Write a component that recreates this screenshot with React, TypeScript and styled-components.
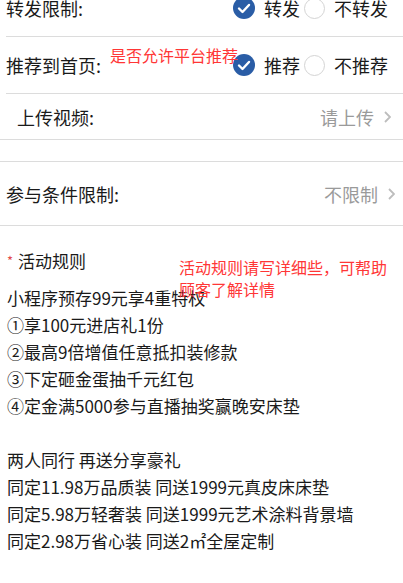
import styled, { createGlobalStyle } from 'styled-components';

const GlobalStyle = createGlobalStyle`
  body {
    margin: 0;
    background: #fff;
    font-family: "Noto Sans CJK SC", "Noto Sans", sans-serif;
    color: #1a1a1a;
  }
`;

const Page = styled.div`
  margin-top: -20px;
  width: 403px;
`;

const Row = styled.div<{ $height: number; $pad: number; $inset?: boolean; $right: number }>`
  position: relative;
  display: flex;
  align-items: center;
  justify-content: space-between;
  height: ${(p) => p.$height}px;
  margin-left: ${(p) => (p.$inset ? 6 : 0)}px;
  padding-left: ${(p) => p.$pad}px;
  padding-right: ${(p) => p.$right}px;
  border-bottom: 1px solid #dcdcdc;
  box-sizing: content-box;
`;

const Label = styled.span`
  font-size: 18px;
  line-height: 24px;
  color: #1a1a1a;
`;

const Note = styled.div<{ $left: number; $top: number }>`
  position: absolute;
  left: ${(p) => p.$left}px;
  top: ${(p) => p.$top}px;
  font-size: 16px;
  line-height: 22px;
  color: #ff3636;
  white-space: pre-line;
  width: 210px;
`;

const RadioGroup = styled.div`
  display: flex;
  align-items: center;
`;

const RadioItem = styled.label`
  display: flex;
  align-items: center;
  font-size: 18px;
  line-height: 24px;
  margin-right: 4px;

  &:last-child {
    margin-right: 0;
  }
`;

const Circle = styled.span`
  display: inline-block;
  width: 19px;
  height: 19px;
  border: 1px solid #d4d4d4;
  border-radius: 50%;
  margin-right: 9px;
`;

const CheckIcon = styled.svg`
  width: 22px;
  height: 22px;
  margin-right: 9px;
  flex-shrink: 0;
`;

const Value = styled.span`
  display: flex;
  align-items: center;
  gap: 10px;
  font-size: 18px;
  line-height: 24px;
  color: #9a9a9a;
`;

const Spacer = styled.div`
  height: 21px;
  border-bottom: 1px solid #dcdcdc;
`;

const Rules = styled.div`
  position: relative;
  padding: 21px 0 0 7px;
`;

const RulesTitle = styled.div`
  font-size: 17px;
  line-height: 27px;
  margin-bottom: 10px;
`;

const Star = styled.span`
  color: #e34a4a;
  font-size: 13px;
  margin-right: 5px;
  vertical-align: 2px;
`;

const Line = styled.div`
  font-size: 17px;
  line-height: 27px;
  min-height: 27px;
`;

function Radio({ label, checked }: { label: string; checked?: boolean }) {
  return (
    <RadioItem>
      {checked ? (
        <CheckIcon viewBox="0 0 22 22">
          <circle cx="11" cy="11" r="11" fill="#2a5da6" />
          <polyline
            points="6,11.5 9.5,15 16,8"
            fill="none"
            stroke="#fff"
            strokeWidth="2.4"
            strokeLinecap="round"
            strokeLinejoin="round"
          />
        </CheckIcon>
      ) : (
        <Circle />
      )}
      {label}
    </RadioItem>
  );
}

function Chevron() {
  return (
    <svg width="7" height="12" viewBox="0 0 7 12">
      <polyline points="1,1 6,6 1,11" fill="none" stroke="#bdbdbd" strokeWidth="1.8" />
    </svg>
  );
}

const rules = [
  '小程序预存99元享4重特权',
  '①享100元进店礼1份',
  '②最高9倍增值任意抵扣装修款',
  '③下定砸金蛋抽千元红包',
  '④定金满5000参与直播抽奖赢晚安床垫',
  '',
  '两人同行 再送分享豪礼',
  '同定11.98万品质装 同送1999元真皮床床垫',
  '同定5.98万轻奢装 同送1999元艺术涂料背景墙',
  '同定2.98万省心装 同送2㎡全屋定制',
];

export default function App() {
  return (
    <Page>
      <GlobalStyle />
      <Row $height={56} $pad={0} $inset $right={15}>
        <Label>转发限制:</Label>
        <RadioGroup>
          <Radio label="转发" checked />
          <Radio label="不转发" />
        </RadioGroup>
      </Row>
      <Row $height={56} $pad={0} $inset $right={15}>
        <Label>推荐到首页:</Label>
        <Note $left={104} $top={7}>是否允许平台推荐</Note>
        <RadioGroup>
          <Radio label="推荐" checked />
          <Radio label="不推荐" />
        </RadioGroup>
      </Row>
      <Row $height={45} $pad={17} $right={12}>
        <Label>上传视频:</Label>
        <Value>
          请上传
          <Chevron />
        </Value>
      </Row>
      <Spacer />
      <Row $height={63} $pad={6} $right={8}>
        <Label>参与条件限制:</Label>
        <Value>
          不限制
          <Chevron />
        </Value>
      </Row>
      <Rules>
        <RulesTitle>
          <Star>*</Star>活动规则
        </RulesTitle>
        <Note $left={179} $top={30}>
          {'活动规则请写详细些，可帮助\n顾客了解详情'}
        </Note>
        {rules.map((r, i) => (
          <Line key={i}>{r}</Line>
        ))}
      </Rules>
    </Page>
  );
}
